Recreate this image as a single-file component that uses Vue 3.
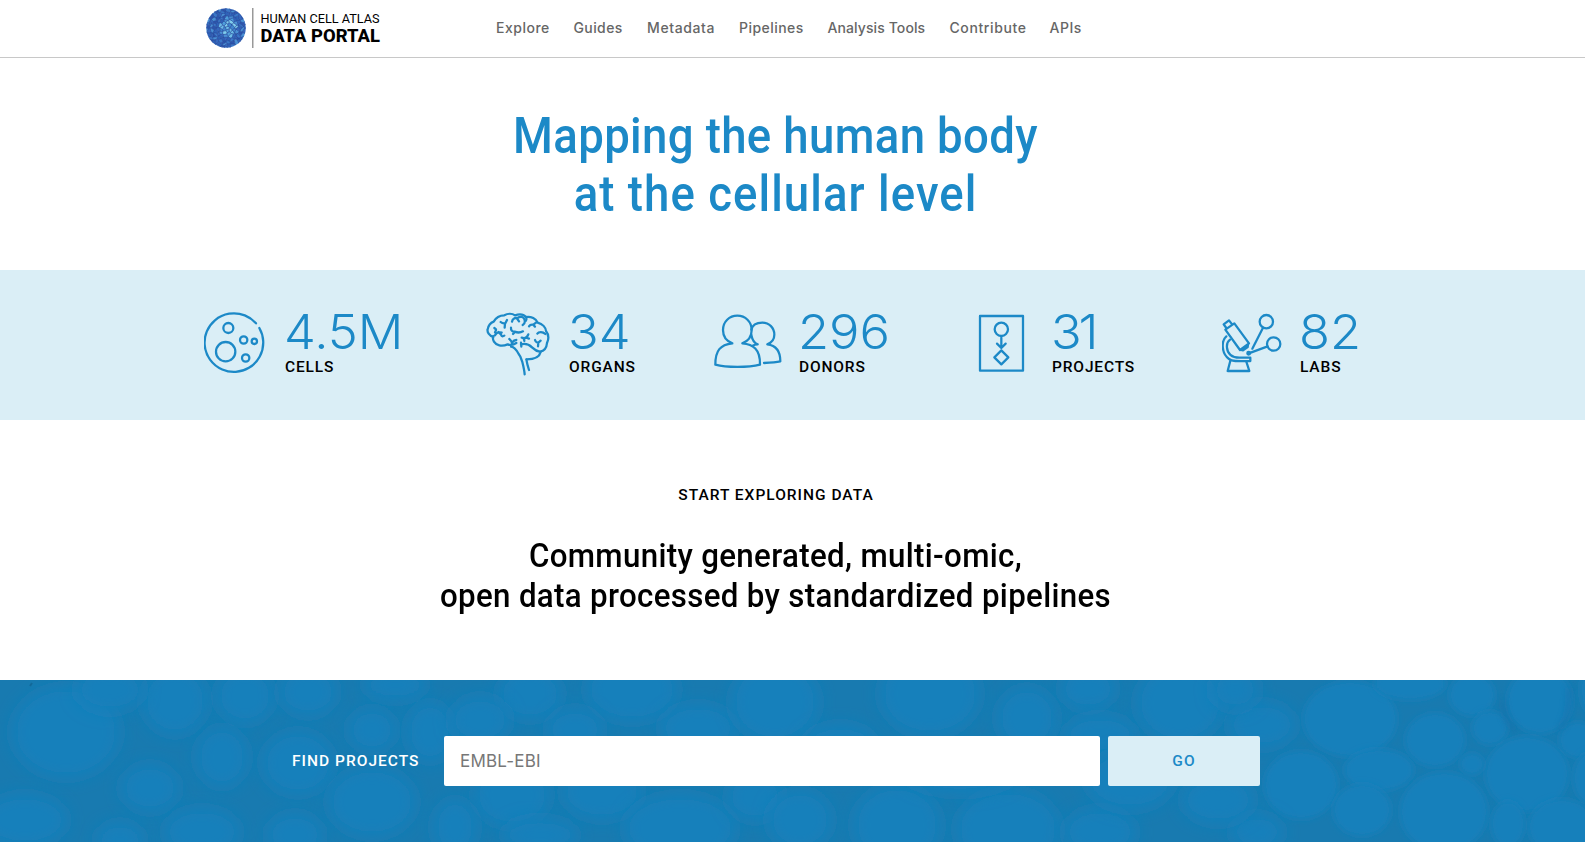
<script setup>
const navItems = ['Explore', 'Guides', 'Metadata', 'Pipelines', 'Analysis Tools', 'Contribute', 'APIs']

// Cells of the globe: each seed's region is the disc's bounding box cut by the bisectors to its neighbours.
function buildGlobe() {
  const seeds = []
  for (let i = 0; i < 120; i++) {
    const r = 20.5 * Math.sqrt((i + 0.5) / 120)
    const a = i * 2.39996 + Math.sin(i * 7.3) * 0.22
    seeds.push([20 + r * Math.cos(a) + Math.sin(i * 3.1) * 0.5, 20 + r * Math.sin(a)])
  }
  const tones = ['#2f62b8', '#3b78c8', '#2c55ac', '#4a90d4', '#3568be']
  const bright = ['#6cbbe6', '#4f9edb', '#7fcdec', '#3f86cf']
  return seeds.map(([sx, sy], i) => {
    let poly = [[-2, -2], [42, -2], [42, 42], [-2, 42]]
    seeds.forEach(([ox, oy], j) => {
      if (i === j) return
      const nx = ox - sx
      const ny = oy - sy
      const c = (ox * ox + oy * oy - sx * sx - sy * sy) / 2
      const side = (p) => p[0] * nx + p[1] * ny - c
      const next = []
      poly.forEach((p, k) => {
        const q = poly[(k + 1) % poly.length]
        const dp = side(p)
        const dq = side(q)
        if (dp <= 0) next.push(p)
        if (dp * dq < 0) {
          const t = dp / (dp - dq)
          next.push([p[0] + (q[0] - p[0]) * t, p[1] + (q[1] - p[1]) * t])
        }
      })
      poly = next
    })
    const near = Math.hypot(sx - 22, sy - 19) < 9
    const set = near ? bright : tones
    return { points: poly.map((p) => p.map((n) => n.toFixed(2)).join(',')).join(' '), fill: set[(i * 7) % set.length] }
  })
}
const globe = buildGlobe()

// Soft cells behind the search band: centre x, centre y, radius x, radius y.
const blobs = [
  [66, 52, 54, 46], [175, 21, 33, 34], [245, 16, 29, 28], [308, 12, 29, 24], [222, 77, 26, 30], [150, 108, 29, 24],
  [25, 140, 42, 26], [202, 152, 38, 24], [120, 160, 24, 18], [298, 83, 36, 32], [372, 122, 44, 35], [295, 155, 28, 22],
  [430, 52, 24, 30], [395, 5, 32, 16], [530, 14, 32, 26], [632, 10, 46, 32], [575, 50, 28, 22], [698, 48, 38, 24],
  [775, 22, 44, 40], [512, 115, 38, 32], [602, 112, 40, 28], [680, 148, 56, 34], [755, 117, 28, 24], [455, 147, 22, 28],
  [372, 50, 24, 22], [540, 155, 38, 17], [800, 140, 32, 30], [930, 14, 50, 42], [1027, 38, 30, 31], [1088, 9, 28, 21],
  [1180, 23, 44, 40], [897, 145, 44, 40], [1008, 149, 52, 40], [1100, 152, 36, 24], [1100, 55, 36, 20], [1262, 45, 34, 23],
  [1350, 39, 47, 38], [1301, 105, 37, 34], [1435, 60, 30, 27], [1379, 90, 35, 21], [1362, 130, 29, 26], [1444, 132, 44, 40],
  [1472, 15, 23, 21], [1490, 48, 18, 17], [1540, 21, 33, 33], [1527, 94, 42, 38], [1578, 60, 19, 18], [1562, 147, 34, 28],
  [1508, 144, 17, 23], [1472, 84, 12, 11], [1591, 98, 18, 26], [1257, 152, 26, 18], [1218, 120, 36, 24], [1410, 4, 36, 16], [1598, 10, 18, 28],
  [110, 10, 34, 22], [480, 40, 30, 24], [840, 70, 40, 26], [1130, 100, 44, 30], [1235, 10, 24, 20], [960, 90, 60, 24]
]
</script>

<template>
  <div class="page">
    <header class="header">
      <svg class="logo" width="180" height="42" viewBox="0 0 180 42">
        <defs>
          <clipPath id="disc"><circle cx="20" cy="20" r="19.8" /></clipPath>
        </defs>
        <g clip-path="url(#disc)">
          <polygon v-for="(cell, i) in globe" :key="i" :points="cell.points" :fill="cell.fill" stroke="#23479c" stroke-width=".55" />
        </g>
        <rect x="46" y="0" width="1.5" height="40" fill="#999" />
        <text class="logo-top" x="54.5" y="15.3" textLength="119" lengthAdjust="spacingAndGlyphs">HUMAN CELL ATLAS</text>
        <text class="logo-bottom" x="54.5" y="34" textLength="119.5" lengthAdjust="spacingAndGlyphs">DATA PORTAL</text>
      </svg>
      <nav class="nav">
        <a v-for="item in navItems" :key="item">{{ item }}</a>
      </nav>
    </header>

    <section class="hero">
      <h1><span class="hero-a">Mapping the human body</span><span class="hero-b">at the cellular level</span></h1>
    </section>

    <section class="stats">
      <div class="stat cells">
        <svg width="66" height="68" viewBox="27 27 198 204">
          <path d="M193 81A88 88 0 1 1 183 67" />
          <circle cx="100" cy="81" r="15" /><circle cx="146" cy="117" r="11" /><circle cx="178" cy="121" r="8" />
          <circle cx="92" cy="152" r="29" /><circle cx="152" cy="171" r="11" />
        </svg>
        <div class="figures"><strong>4.5M</strong><span>CELLS</span></div>
      </div>
      <div class="stat organs">
        <svg width="66" height="68" viewBox="33 30 198 204">
          <path d="M55 111C42 107 36 96 38 88C40 77 46 69 56 65C62 54 74 46 88 46C97 41 111 40 120 46C132 42 146 43 153 51C168 48 184 57 188 68C203 72 212 83 213 93C221 103 222 116 216 129C215 142 208 153 195 155" />
          <path d="M55 108C51 119 58 133 73 136C80 138 91 136 98 133C106 136 117 134 124 129" />
          <path d="M60 106C64 98 73 95 80 98M70 96L76 102M78 104C80 111 85 109 88 107M58 84L63 88C64 92 61 94 60 97" />
          <path d="M77 66C81 70 86 71 91 70L96 60M90 70L89 83M111 65C113 57 118 53 127 54C137 48 145 50 148 57C151 65 150 71 143 75M125 54L132 64" />
          <path d="M108 83C107 91 112 96 120 95L114 102M119 95C129 99 137 98 144 94" />
          <path d="M153 51C155 55 155 59 153 62M162 79C165 74 170 73 175 74L184 67M175 74L180 80M187 101C191 95 203 94 211 102" />
          <path d="M140 113C145 113 148 117 148 123M147 115C153 114 158 109 160 103M154 113L162 116M180 120C182 126 185 128 190 128L197 122M190 128L189 139" />
          <path d="M103 117C108 121 112 124 111 132M112 127C116 121 119 120 124 120M138 133C150 130 163 134 171 142C178 149 186 154 197 156C194 169 182 178 155 178" />
          <path d="M108 140C119 140 125 151 131 162C138 170 139 179 142 186C145 198 148 210 149 223M154 178C156 190 159 201 162 210M138 128L139 140" />
        </svg>
        <div class="figures"><strong>34</strong><span>ORGANS</span></div>
      </div>
      <div class="stat donors">
        <svg width="70" height="68" viewBox="27 30 210 204">
          <path d="M82 130C64 123 54 109 54 90C54 65 73 47 97 47C121 47 140 65 140 90C140 109 130 123 112 130C144 133 166 147 165 194C130 203 64 203 31 194C31 151 46 134 82 130Z" />
          <path d="M139 89C142 76 155 68 172 68C193 68 208 84 208 104C208 117 201 127 187 133C212 136 226 151 226 184C211 187 194 188 177 189M139 105C142 120 148 130 158 133C152 133 146 135 143 137" />
        </svg>
        <div class="figures"><strong>296</strong><span>DONORS</span></div>
      </div>
      <div class="stat projects">
        <svg width="50" height="68" viewBox="39 30 150 204">
          <rect x="45" y="48" width="129" height="164" />
          <circle cx="109" cy="88" r="20" /><path d="M109 113V144M96 131L109 144L122 131M109 151L130 172L109 193L88 172Z" />
        </svg>
        <div class="figures"><strong>31</strong><span>PROJECTS</span></div>
      </div>
      <div class="stat labs">
        <svg width="64" height="68" viewBox="36 30 192 204">
          <path d="M46 89L73 70L117 130L90 150ZM49 84L41 73L57 61L67 74M93 150L99 151L113 141L114 134M61 182L53 213H118L109 185" />
          <path d="M49 109C33 123 34 160 57 177C66 184 78 184 121 183V173H88C65 173 52 160 51 143C50 133 53 124 60 119" />
          <circle cx="169" cy="65" r="20" /><circle cx="191" cy="132" r="20" />
          <path d="M159 83L127 146M173 139L116 160" /><circle cx="116" cy="160" r="4" class="dot" />
        </svg>
        <div class="figures"><strong>82</strong><span>LABS</span></div>
      </div>
    </section>

    <section class="intro">
      <p>START EXPLORING DATA</p>
      <h2><span class="intro-a">Community generated, multi-omic,</span><span class="intro-b">open data processed by standardized pipelines</span></h2>
    </section>

    <section class="search">
      <svg class="texture" width="1585" height="162" viewBox="0 0 1585 162">
        <defs>
          <filter id="soft" x="-50%" y="-50%" width="200%" height="200%"><feGaussianBlur stdDeviation="8" /></filter>
          <filter id="crisp" x="-30%" y="-30%" width="160%" height="160%"><feGaussianBlur stdDeviation="3.2" /></filter>
        </defs>
        <rect width="1585" height="162" fill="#187ab0" />
        <ellipse
          v-for="([cx, cy, rx, ry], i) in blobs" :key="i" :cx="cx" :cy="cy" :rx="rx" :ry="ry" fill="#1980bb"
          :filter="cx > 1280 ? 'url(#crisp)' : 'url(#soft)'"
        />
        <path d="M1502 20Q1504 42 1516 50M1569 8Q1570 36 1560 49" fill="none" stroke="#166da8" stroke-width="4" opacity=".6" filter="url(#crisp)" />
        <path d="M32 3L30 6" stroke="#12628f" stroke-width="2" opacity=".7" />
      </svg>
      <form class="search-form" @submit.prevent>
        <label for="query">FIND PROJECTS</label>
        <input id="query" type="text" placeholder="EMBL-EBI" />
        <button type="submit">GO</button>
      </form>
    </section>
  </div>
</template>

<style>
body { background: #fff; }
</style>

<style scoped>
.page { width: 1585px; height: 854px; overflow: hidden; background: #fff; font-family: Roboto, "Liberation Sans", sans-serif; }
.header { box-sizing: border-box; height: 58px; border-bottom: 1px solid #c8c8c8; display: flex; padding: 8px 0 0 206px; }
.logo { flex: none; display: block; overflow: visible; }
.logo-top { font-size: 13.6px; font-weight: 400; }
.logo-bottom { font-size: 19px; font-weight: 800; }
.nav { display: grid; grid-template-columns: 77.5px 73.5px 92px 88.5px 122px 100px 40px; margin-left: 110px; font: 500 14px/40px Inter, sans-serif; letter-spacing: .25px; color: #666; white-space: nowrap; }
.nav a:nth-child(1) { letter-spacing: .5px; }
.nav a:nth-child(2) { letter-spacing: .4px; }
.nav a:nth-child(3) { letter-spacing: .6px; }
.nav a:nth-child(4) { letter-spacing: .45px; }
.nav a:nth-child(5) { letter-spacing: .1px; }
.nav a:nth-child(6) { letter-spacing: .6px; }
.nav a:nth-child(7) { letter-spacing: .5px; }
.hero { height: 212px; box-sizing: border-box; padding-top: 48.5px; }
h1, h2, p { margin: 0; }
h1 span, h2 span { display: block; width: 1551px; text-align: center; white-space: nowrap; }
h1 { font-size: 49.5px; line-height: 58px; font-weight: 500; color: #1c89c7; }
h1 span { transform: scaleX(.92); }
.hero-a { letter-spacing: .4px; }
.hero-b { letter-spacing: 1.15px; }
.stats { height: 150px; box-sizing: border-box; padding: 40px 0 0 204px; background: #daeef6; display: grid; grid-template-columns: 282px 228px 264px 244px 1fr; }
.stat { display: flex; }
.stat svg { flex: none; fill: none; stroke: #1c89c7; stroke-width: 6.8; stroke-linecap: round; stroke-linejoin: round; }
.stat .dot { fill: #1c89c7; }
.figures { display: flex; flex-direction: column; align-items: flex-start; }
.figures strong { font: 300 48.5px/50px Inter, sans-serif; color: #1c89c7; margin: -3.5px 0 0 -1.5px; transform: scaleX(1.045); transform-origin: left; }
.figures span { font-size: 15.5px; line-height: 20px; font-weight: 500; letter-spacing: .85px; }
.cells .figures { margin-left: 15px; }
.organs .figures { margin-left: 17px; }
.donors .figures { margin-left: 15px; }
.projects .figures { margin-left: 24px; }
.projects strong { letter-spacing: -3px; }
.labs .figures { margin-left: 14px; }
.intro { height: 260px; box-sizing: border-box; padding-top: 65px; }
.intro p { width: 1552px; text-align: center; font-size: 15.5px; line-height: 20px; font-weight: 500; letter-spacing: 1px; }
h2 { margin-top: 30px; font-size: 34px; line-height: 40px; font-weight: 500; }
h2 span { transform: scaleX(.92); }
.intro-a, .intro-b { letter-spacing: .36px; }
.search { position: relative; height: 162px; overflow: hidden; background: #187bb2; }
.texture { position: absolute; inset: 0; }
.search-form { position: relative; display: grid; grid-template-columns: 152px 656px 152px; column-gap: 0; padding: 56px 0 0 292px; }
label { color: #fff; font-size: 15.5px; line-height: 50px; font-weight: 500; letter-spacing: 1.02px; white-space: nowrap; }
input { box-sizing: border-box; height: 50px; border: 0; border-radius: 2px; padding: 0 16px 1px; background: #fff; font: 400 17px Inter, sans-serif; letter-spacing: .2px; outline: 0; }
input::placeholder { color: #777; opacity: 1; }
button { margin-left: 8px; width: 152px; height: 50px; padding: 0; border: 0; border-radius: 2px; background: #daeef6; color: #1c89c7; font: 500 15.5px Roboto, sans-serif; letter-spacing: 1.1px; }
</style>
